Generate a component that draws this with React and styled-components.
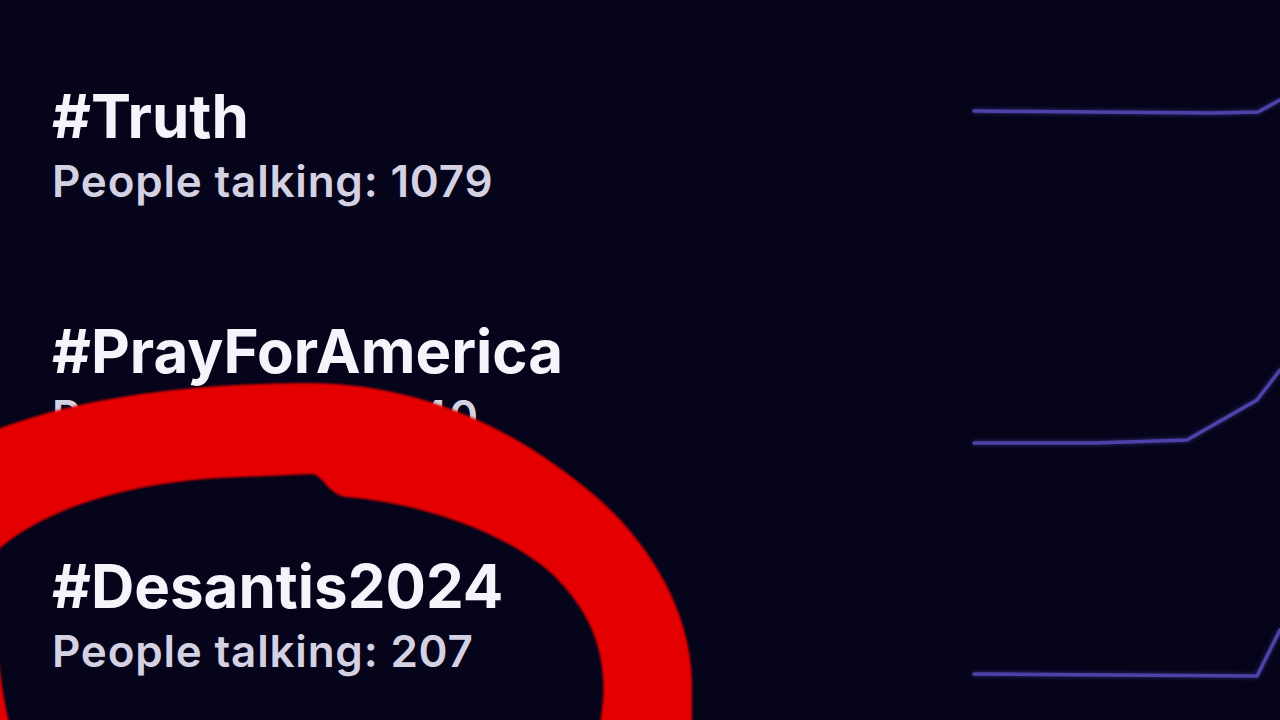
import React from "react";
import styled, { createGlobalStyle } from "styled-components";

const GlobalStyle = createGlobalStyle`
  html, body {
    margin: 0;
    padding: 0;
    background: #06041a;
    overflow: hidden;
  }
`;

const Screen = styled.div`
  position: relative;
  width: 1280px;
  height: 720px;
  overflow: hidden;
  background: #06041a;
  font-family: Inter, "Noto Sans", sans-serif;
`;

const TrendList = styled.div`
  display: flex;
  flex-direction: column;
  padding-top: 26px;
`;

const TrendRow = styled.div`
  display: grid;
  grid-template-columns: 1fr 306px;
  height: 235px;
  padding-left: 52px;
`;

const TrendText = styled.div`
  display: flex;
  flex-direction: column;
  justify-content: center;
`;

const Tag = styled.div`
  font-size: 60px;
  line-height: 72px;
  font-weight: 700;
  color: #f5f4fb;
`;

const Talking = styled.div`
  margin-top: 3px;
  font-size: 44px;
  line-height: 52px;
  font-weight: 600;
  color: #d3d1e2;
  letter-spacing: 0.8px;
`;

const Spark = styled.svg`
  display: block;
  width: 306px;
  height: 235px;
  overflow: visible;

  polyline {
    fill: none;
    stroke: #4d42a8;
    stroke-width: 3.5;
    stroke-linejoin: round;
    stroke-linecap: round;
    filter: drop-shadow(0 0 2px rgba(90, 75, 200, 0.6));
  }
`;

const Scribble = styled.svg`
  position: absolute;
  inset: 0;
  width: 1280px;
  height: 720px;
  pointer-events: none;

  path {
    fill: #e40000;
    fill-rule: evenodd;
    filter: blur(0.8px);
  }
`;

const trends = [
  { tag: "#Truth", count: 1079, line: "0,85 120,86 240,87 284,86 306,74" },
  { tag: "#PrayForAmerica", count: 540, line: "0,182 120,182 213,179 283,139 306,109" },
  { tag: "#Desantis2024", count: 207, line: "0,178 140,179 283,180 306,134" },
];

const ring =
  "M -10 432 C 60 405 150 385 300 383 C 420 381 520 430 600 500 C 650 545 690 610 692 680 L 692 760 L -10 760 Z " +
  "M 20 760 C 5 720 -10 640 -2 550 C 40 512 120 484 220 478 L 312 474 C 324 476 326 492 345 497 " +
  "C 420 503 500 530 550 572 C 590 610 606 650 603 700 L 596 760 Z";

export default function App() {
  return (
    <Screen>
      <GlobalStyle />
      <TrendList>
        {trends.map((t) => (
          <TrendRow key={t.tag}>
            <TrendText>
              <Tag>{t.tag}</Tag>
              <Talking>People talking: {t.count}</Talking>
            </TrendText>
            <Spark viewBox="0 0 306 235">
              <polyline points={t.line} />
            </Spark>
          </TrendRow>
        ))}
      </TrendList>
      <Scribble viewBox="0 0 1280 720">
        <path d={ring} />
      </Scribble>
    </Screen>
  );
}
